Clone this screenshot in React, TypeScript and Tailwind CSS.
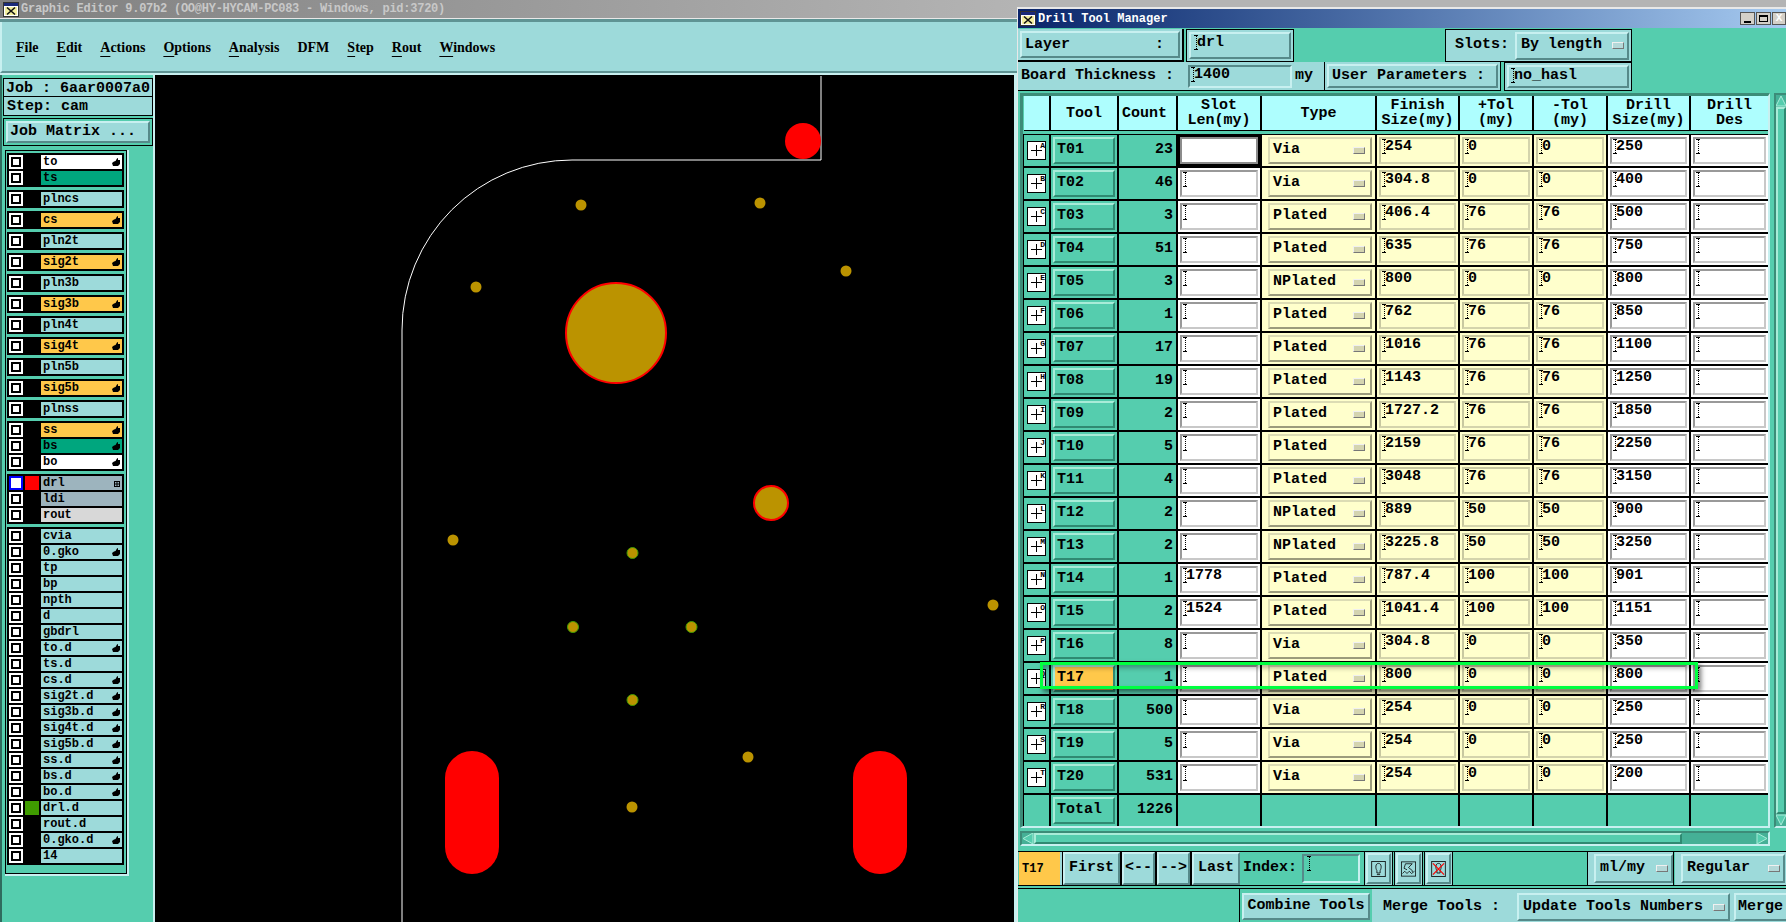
import React from "react";

const raised = "border-2 border-t-[#c8f0f0] border-l-[#c8f0f0] border-r-[#568a8a] border-b-[#568a8a]";
const sunken = "border-2 border-t-[#568a8a] border-l-[#568a8a] border-r-[#c8f0f0] border-b-[#c8f0f0]";
const tealRaised = "border-2 border-t-[#a8ecd8] border-l-[#a8ecd8] border-r-[#2f8a72] border-b-[#2f8a72]";
const yellowRaised = "border-2 border-t-[#dcdcb4] border-l-[#dcdcb4] border-r-[#9c9c7c] border-b-[#9c9c7c]";

const layerGroups = [
  [{ n: "to", c: "bg-white", h: 1 }, { n: "ts", c: "bg-[#00a67e]" }],
  [{ n: "plncs" }],
  [{ n: "cs", c: "bg-[#ffc84a]", h: 1 }],
  [{ n: "pln2t" }],
  [{ n: "sig2t", c: "bg-[#ffc84a]", h: 1 }],
  [{ n: "pln3b" }],
  [{ n: "sig3b", c: "bg-[#ffc84a]", h: 1 }],
  [{ n: "pln4t" }],
  [{ n: "sig4t", c: "bg-[#ffc84a]", h: 1 }],
  [{ n: "pln5b" }],
  [{ n: "sig5b", c: "bg-[#ffc84a]", h: 1 }],
  [{ n: "plnss" }],
  [{ n: "ss", c: "bg-[#ffc84a]", h: 1 }, { n: "bs", c: "bg-[#00a67e]", h: 1 }, { n: "bo", c: "bg-white", h: 1 }],
  [{ n: "drl", c: "bg-[#9db4be]", s: "bg-[#ff0000]", active: 1 }, { n: "ldi", c: "bg-[#9db4be]" }, { n: "rout", c: "bg-[#d8d8d8]" }],
  [
    { n: "cvia" }, { n: "0.gko", h: 1 }, { n: "tp" }, { n: "bp" }, { n: "npth" }, { n: "d" }, { n: "gbdrl" },
    { n: "to.d", h: 1 }, { n: "ts.d" }, { n: "cs.d", h: 1 }, { n: "sig2t.d", h: 1 }, { n: "sig3b.d", h: 1 },
    { n: "sig4t.d", h: 1 }, { n: "sig5b.d", h: 1 }, { n: "ss.d", h: 1 }, { n: "bs.d", h: 1 }, { n: "bo.d", h: 1 },
    { n: "drl.d", s: "bg-[#3f9c00]" }, { n: "rout.d" }, { n: "0.gko.d", h: 1 }, { n: "14" },
  ],
] as { n: string; c?: string; h?: number; s?: string; active?: number }[][];

const tools = [
  ["T01", "23", "", "Via", "254", "0", "0", "250"],
  ["T02", "46", "", "Via", "304.8", "0", "0", "400"],
  ["T03", "3", "", "Plated", "406.4", "76", "76", "500"],
  ["T04", "51", "", "Plated", "635", "76", "76", "750"],
  ["T05", "3", "", "NPlated", "800", "0", "0", "800"],
  ["T06", "1", "", "Plated", "762", "76", "76", "850"],
  ["T07", "17", "", "Plated", "1016", "76", "76", "1100"],
  ["T08", "19", "", "Plated", "1143", "76", "76", "1250"],
  ["T09", "2", "", "Plated", "1727.2", "76", "76", "1850"],
  ["T10", "5", "", "Plated", "2159", "76", "76", "2250"],
  ["T11", "4", "", "Plated", "3048", "76", "76", "3150"],
  ["T12", "2", "", "NPlated", "889", "50", "50", "900"],
  ["T13", "2", "", "NPlated", "3225.8", "50", "50", "3250"],
  ["T14", "1", "1778", "Plated", "787.4", "100", "100", "901"],
  ["T15", "2", "1524", "Plated", "1041.4", "100", "100", "1151"],
  ["T16", "8", "", "Via", "304.8", "0", "0", "350"],
  ["T17", "1", "", "Plated", "800", "0", "0", "800"],
  ["T18", "500", "", "Via", "254", "0", "0", "250"],
  ["T19", "5", "", "Via", "254", "0", "0", "250"],
  ["T20", "531", "", "Via", "254", "0", "0", "200"],
];

const menus = [
  ["F", "ile"], ["E", "dit"], ["A", "ctions"], ["O", "ptions"], ["A", "nalysis"], ["", "DFM"], ["S", "tep"], ["R", "out"], ["W", "indows"],
];

const smallPads = [
  [581, 205, 0], [760, 203, 0], [846, 271, 0], [476, 287, 0], [453, 540, 0], [632.5, 553, 1], [573, 627, 1],
  [691.5, 627, 1], [632.5, 700, 1], [993, 605, 0], [748, 757, 0], [632, 807, 0],
];

function WinIcon() {
  return (
    <svg width="16" height="15" viewBox="0 0 16 15" className="shrink-0">
      <rect x="0.5" y="0.5" width="15" height="14" fill="#ffffff" stroke="#333333" />
      <rect x="1" y="1" width="14" height="3" fill="#1a2a7a" />
      <rect x="2" y="5" width="12" height="8" fill="#f4f0a0" />
      <path d="M4 5.5 L12 12.5 M12 5.5 L4 12.5" stroke="#111111" strokeWidth="1.6" />
    </svg>
  );
}

function Hand() {
  return (
    <svg width="8" height="8" viewBox="0 0 8 8" className="absolute right-[2px] top-[3px]">
      <path d="M0 5 L2 3.5 L3.5 3 L5 0.5 L6 0 L6 2 L8 2 L8 6 L6 8 L1 8 Z" fill="#000000" />
    </svg>
  );
}

function CheckBox({ active }: { active?: number }) {
  return (
    <div className={`w-[14px] h-[14px] shrink-0 p-[2px] ${active ? "bg-[#0000ff]" : "bg-white"}`}>
      <div className={`w-full h-full bg-white border-2 ${active ? "border-white" : "border-black"}`}></div>
    </div>
  );
}

function LayerRow({ l }: { l: { n: string; c?: string; h?: number; s?: string; active?: number } }) {
  return (
    <div className="flex items-center h-[14px] bg-black gap-[2px]">
      <CheckBox active={l.active} />
      <div className={`w-[14px] h-[14px] shrink-0 ${l.s ?? "bg-black"}`}></div>
      <div className={`relative flex-1 h-[14px] pl-[2px] text-[12px] leading-[15px] text-black ${l.c ?? "bg-[#9ddada]"}`}>
        {l.n}
        {l.h ? <Hand /> : null}
        {l.active ? (
          <svg width="6" height="6" viewBox="0 0 6 6" className="absolute right-[2px] top-[5px]">
            <rect x="0.5" y="0.5" width="5" height="5" fill="none" stroke="#000000" />
            <path d="M3 0 V6 M0 3 H6" stroke="#000000" />
          </svg>
        ) : null}
      </div>
    </div>
  );
}

function Beam() {
  return (
    <svg width="5" height="15" viewBox="0 0 5 15" className="shrink-0 -mr-[2px]">
      <path d="M0 0.5 H4 M0 14.5 H4" stroke="#000000" />
      <path d="M2.5 1 V14" stroke="#000000" strokeDasharray="1 1" />
    </svg>
  );
}

function Field({ value, yellow, focus }: { value: string; yellow?: boolean; focus?: boolean }) {
  const bevel = yellow
    ? "border-t-[#c8c8a0] border-l-[#c8c8a0] border-r-[#d4d4ac] border-b-[#d4d4ac]"
    : "border-t-[#999999] border-l-[#999999] border-r-[#c8c8c8] border-b-[#c8c8c8]";
  if (focus) {
    return (
      <div className="bg-black p-[2px]">
        <div className="h-full bg-white border-2 border-[#8c8c8c]"></div>
      </div>
    );
  }
  return (
    <div className={`p-[2px] ${yellow ? "bg-[#ffffcc]" : "bg-white"}`}>
      <div className={`h-full border-2 pl-[1px] flex items-start text-[15px] leading-[16px] ${bevel}`}>
        <Beam />
        <span>{value}</span>
      </div>
    </div>
  );
}

function Notch({ tone }: { tone?: string }) {
  return <div className={`w-[12px] h-[7px] shrink-0 border border-t-[#f0f0f0] border-l-[#f0f0f0] border-r-[#777777] border-b-[#777777] ${tone ?? "bg-[#b4d8d8]"}`}></div>;
}

function Btn({ label, className }: { label: string; className: string }) {
  return (
    <div className={`flex items-center justify-center bg-[#9ddada] text-[15px] ${raised} ${className}`}>{label}</div>
  );
}

function Select({ label, className }: { label: string; className: string }) {
  return (
    <div className={`flex items-center justify-between pl-[4px] pr-[3px] bg-[#9ddada] text-[15px] ${raised} ${className}`}>
      <span>{label}</span>
      <Notch />
    </div>
  );
}

function IconBtn({ children }: { children: React.ReactNode }) {
  return (
    <div className="w-[29px] h-[33px] p-px bg-[#9ddada] border-x border-black flex">
      <div className={`flex-1 flex items-center justify-center ${raised}`}>{children}</div>
    </div>
  );
}

function BoardView() {
  return (
    <svg width="859" height="847" viewBox="155 75 859 847" className="block">
      <rect x="155" y="75" width="859" height="847" fill="#000000" />
      <path d="M821 76 V160 H572 A170 170 0 0 0 402 330 V922" fill="none" stroke="#ffffff" strokeWidth="1" />
      <circle cx="803" cy="141" r="18" fill="#ff0000" />
      <circle cx="616" cy="333" r="50" fill="#bb9300" stroke="#ff0000" strokeWidth="2" />
      <circle cx="771" cy="503" r="17" fill="#bb9300" stroke="#ff0000" strokeWidth="2" />
      {smallPads.map(([x, y, g], i) => (
        <circle key={i} cx={x} cy={y} r="5.5" fill="#bb9300" stroke={g ? "#3f9c00" : "none"} strokeWidth="1" />
      ))}
      <rect x="445" y="751" width="54" height="123" rx="27" fill="#ff0000" />
      <rect x="853" y="751" width="54" height="123" rx="27" fill="#ff0000" />
    </svg>
  );
}

export default function App() {
  return (
    <div className="w-[1786px] h-[922px] overflow-hidden flex font-['Liberation_Mono',monospace] font-bold text-black bg-[#55cdae]">
      {/* main window */}
      <div className="w-[1017px] shrink-0 flex flex-col">
        <div className="h-[19px] shrink-0 bg-linear-to-r from-[#808080] to-[#b4b4b4] border-b border-[#e8e8e8] flex items-center pl-[3px] gap-[2px] text-[#c8c8c8] text-[12px] tracking-[-0.25px] whitespace-nowrap">
          <WinIcon />
          <span>Graphic Editor 9.07b2 (OO@HY-HYCAM-PC083 - Windows, pid:3720)</span>
        </div>
        <div className="h-[56px] shrink-0 bg-[#5f9494] pt-[3px] border-b-2 border-[#c8f0f0]">
          <div className="h-[51px] bg-[#9ddada] border-l-2 border-b-2 border-l-[#c8f0f0] border-b-[#5f9494] flex items-center pl-[14px] pt-px gap-[18px] font-['Liberation_Serif',serif] text-[14px]">
            {menus.map(([u, r], i) => (
              <span key={i}>
                <span className="underline underline-offset-4">{u}</span>
                {r}
              </span>
            ))}
          </div>
        </div>
        <div className="flex-1 flex min-h-0">
          <div className="w-[155px] shrink-0 bg-[#55cdae] border-l-2 border-l-[#2f6b5e] border-r-2 border-r-[#c8f0f0] pt-[3px] flex flex-col text-[15px]">
            <div className="ml-px border border-black bg-[#9ddada]">
              <div className="h-[18px] leading-[19px] pl-[2px] border-b border-black whitespace-nowrap">Job : 6aar0007a0</div>
              <div className="h-[18px] leading-[20px] pl-[3px]">Step: cam</div>
            </div>
            <div className="ml-px mt-[2px] h-[28px] border border-black p-[2px] bg-[#55cdae]">
              <div className={`h-full pl-[2px] pt-px flex items-center bg-[#9ddada] ${raised}`}>Job Matrix ...</div>
            </div>
            <div className="flex mt-[4px]">
              <div className="ml-[3px] border-r-2 border-b-2 border-[#c8f0f0]">
                <div className="border border-black pl-px pr-[2px] pt-[2px] pb-[8px] flex flex-col gap-[3px] bg-[#55cdae] w-[122px]">
                  {layerGroups.map((g, i) => (
                    <div key={i} className="border-2 border-black bg-black flex flex-col gap-[2px]">
                      {g.map((l) => (
                        <LayerRow key={l.n} l={l} />
                      ))}
                    </div>
                  ))}
                </div>
              </div>
            </div>
          </div>
          <div className="flex-1 border-r-[3px] border-[#c8f0f0] bg-black overflow-hidden">
            <BoardView />
          </div>
        </div>
      </div>

      {/* Drill Tool Manager dialog */}
      <div className="flex-1 flex flex-col min-w-0">
        <div className="h-[7px] shrink-0 bg-[#b4b4b4]"></div>
        <div className="flex-1 flex flex-col border-l border-t-2 border-[#e8e8e8] bg-[#55cdae] min-h-0">
          <div className="h-[19px] shrink-0 mb-px flex items-center pl-[2px] gap-[2px] bg-linear-to-r from-[#0a246a] to-[#a6caf0] text-white text-[12px]">
            <WinIcon />
            <span className="flex-1">Drill Tool Manager</span>
            <div className="flex gap-px">
              <div className="w-[15px] h-[13px] bg-[#d4d0c8] border border-[#555555] flex items-end justify-center pb-px"><div className="w-[7px] h-[2px] bg-black"></div></div>
              <div className="w-[15px] h-[13px] bg-[#d4d0c8] border border-[#555555] p-[2px]"><div className="w-full h-full border border-black border-t-2"></div></div>
              <div className="w-[14px] h-[13px] bg-[#d4d0c8] border border-[#555555] flex items-center justify-center text-[11px] leading-none">X</div>
            </div>
          </div>

          {/* layer + slots */}
          <div className="h-[33px] shrink-0 flex text-[15px]">
            <div className="w-[166px] bg-[#9ddada] border-b-2 border-r-2 border-black p-[2px] flex">
              <div className={`flex-1 flex justify-between items-center px-[3px] pr-[14px] pt-px ${raised}`}>
                <span>Layer</span>
                <span>:</span>
              </div>
            </div>
            <div className="w-[108px] bg-[#9ddada] border border-black ml-[2px] p-[2px] flex">
              <div className={`flex-1 flex items-start pl-[3px] pt-px leading-[15px] ${raised}`}>
                <Beam />
                <span>drl</span>
              </div>
            </div>
            <div className="flex-1"></div>
            <div className="w-[187px] bg-[#9ddada] border border-black flex items-center pl-[9px] pr-[2px] gap-[6px] mr-[154px]">
              <span className="whitespace-nowrap">Slots:</span>
              <Select label="By length" className="flex-1 h-[28px]" />
            </div>
          </div>

          {/* board thickness + user parameters */}
          <div className="h-[29px] shrink-0 flex text-[15px]">
            <div className="w-[307px] bg-[#9ddada] border-b border-r border-black flex items-center pl-[3px] whitespace-nowrap">
              <span>Board Thickness :</span>
              <div className={`w-[104px] h-[23px] ml-[14px] mr-[3px] flex items-start pl-[1px] leading-[15px] ${sunken}`}>
                <Beam />
                <span>1400</span>
              </div>
              <span>my</span>
            </div>
            <div className="w-[176px] bg-[#9ddada] border-b border-r border-black p-[2px] flex">
              <div className={`flex-1 flex items-center pl-[3px] whitespace-nowrap ${raised}`}>User Parameters :</div>
            </div>
            <div className="w-[128px] ml-[3px] bg-[#9ddada] border border-black p-[2px] flex">
              <div className={`flex-1 flex items-start pl-[2px] leading-[15px] pt-px ${raised}`}>
                <Beam />
                <span>no_hasl</span>
              </div>
            </div>
          </div>

          {/* table + vertical scrollbar */}
          <div className="flex pl-[2px] mt-[2px] gap-[4px] shrink-0">
            <div className="w-[750px] shrink-0 border-t-[3px] border-l-[3px] border-t-[#3c8c78] border-l-[#3c8c78] border-r-2 border-b-2 border-r-[#c8f0f0] border-b-[#c8f0f0] pl-px text-[15px]">
              <div className="grid grid-cols-[25px_66px_57px_82px_113px_81px_72px_72px_81px_77px] gap-x-[2px] bg-black border-b border-black mb-[3px] text-center leading-[15px]">
                {["", "Tool", "Count", "Slot\nLen(my)", "Type", "Finish\nSize(my)", "+Tol\n(my)", "-Tol\n(my)", "Drill\nSize(my)", "Drill\nDes"].map((h, i) => (
                  <div key={i} className={`h-[34px] bg-[#aefefe] flex items-center whitespace-pre ${i === 2 ? "justify-start pl-[3px]" : "justify-center"}`}>{h}</div>
                ))}
              </div>
              <div className="relative -ml-px border-l border-t border-black bg-black grid grid-cols-[25px_66px_57px_82px_113px_81px_72px_72px_81px_77px] auto-rows-[31px] gap-[2px]">
                {tools.map((t, i) => (
                  <React.Fragment key={t[0]}>
                    <div className="bg-[#55cdae] flex items-center justify-center">
                      <div className="relative w-[19px] h-[19px] bg-white border border-black">
                        <div className="absolute left-[3px] right-[3px] top-[8px] h-px bg-black"></div>
                        <div className="absolute top-[3px] bottom-[3px] left-[8px] w-px bg-black"></div>
                        <span className="absolute right-0 top-0 text-[8px] leading-[7px] bg-white">{String.fromCharCode(65 + i)}</span>
                      </div>
                    </div>
                    <div className="bg-[#55cdae] p-[2px] flex">
                      <div className={`w-[62px] flex items-center pl-[2px] ${tealRaised} ${t[0] === "T17" ? "bg-[#ffc84a]" : ""}`}>{t[0]}</div>
                    </div>
                    <div className="bg-[#55cdae] flex items-center justify-end pr-[3px]">{t[1]}</div>
                    <Field value={t[2]} focus={i === 0} />
                    <div className="bg-[#ffffcc] py-[2px] pl-[6px] pr-[3px] flex">
                      <div className={`flex-1 flex items-center justify-between pl-[3px] pr-[5px] ${yellowRaised}`}>
                        <span>{t[3]}</span>
                        <Notch tone="bg-[#d4d4b0]" />
                      </div>
                    </div>
                    <Field value={t[4]} yellow />
                    <Field value={t[5]} yellow />
                    <Field value={t[6]} yellow />
                    <Field value={t[7]} />
                    <Field value="" />
                  </React.Fragment>
                ))}
                <div className="bg-[#55cdae]"></div>
                <div className="bg-[#55cdae] p-[2px] flex">
                  <div className={`w-[62px] flex items-center pl-[2px] ${tealRaised}`}>Total</div>
                </div>
                <div className="bg-[#55cdae] flex items-center justify-end pr-[3px]">1226</div>
                <div className="bg-[#55cdae]"></div>
                <div className="bg-[#55cdae]"></div>
                <div className="bg-[#55cdae]"></div>
                <div className="bg-[#55cdae]"></div>
                <div className="bg-[#55cdae]"></div>
                <div className="bg-[#55cdae]"></div>
                <div className="bg-[#55cdae]"></div>
                {/* current tool marker */}
                <div className="absolute left-[16px] top-[527px] w-[658px] h-[27px] border-[3px] border-[#00ff40] shadow-[3px_3px_5px_rgba(0,0,0,0.55),inset_2px_3px_5px_rgba(0,0,0,0.3)]"></div>
              </div>
            </div>
            <div className="flex-1 flex flex-col border-2 border-t-[#3c8c78] border-l-[#3c8c78] border-r-[#c8f0f0] border-b-[#c8f0f0] bg-[#45b096]">
              <svg width="10" height="12" viewBox="0 0 10 12" className="block shrink-0"><path d="M5 1 L10 11 H0 Z" fill="#55cdae" stroke="#a8ecd8" /></svg>
              <div className={`flex-1 bg-[#55cdae] ${tealRaised}`}></div>
              <svg width="10" height="12" viewBox="0 0 10 12" className="block shrink-0"><path d="M5 11 L10 1 H0 Z" fill="#55cdae" stroke="#a8ecd8" /></svg>
            </div>
          </div>

          {/* horizontal scrollbar */}
          <div className="ml-[2px] mt-[3px] w-[750px] h-[15px] shrink-0 flex items-stretch border-2 border-t-[#3c8c78] border-l-[#3c8c78] border-r-[#c8f0f0] border-b-[#c8f0f0] bg-[#45b096]">
            <svg width="12" height="11" viewBox="0 0 12 11" className="block shrink-0"><path d="M1 5.5 L11 0 V11 Z" fill="#55cdae" stroke="#a8ecd8" /></svg>
            <div className={`w-[648px] bg-[#55cdae] ${tealRaised}`}></div>
            <div className="flex-1"></div>
            <svg width="12" height="11" viewBox="0 0 12 11" className="block shrink-0"><path d="M11 5.5 L1 0 V11 Z" fill="#55cdae" stroke="#a8ecd8" /></svg>
          </div>

          {/* navigation toolbar */}
          <div className="h-[35px] mt-[5px] shrink-0 flex border-t border-b border-black text-[15px] whitespace-nowrap">
            <div className="w-[41px] ml-px bg-[#ffc84a] flex items-center pl-[3px] text-[12px]">T17</div>
            <div className="w-[2px] bg-[#9ddada]"></div>
            <div className="flex bg-black gap-[2px] border-l border-black">
              <Btn label="First" className="w-[57px]" />
              <Btn label="<--" className="w-[33px]" />
              <Btn label="-->" className="w-[33px]" />
              <Btn label="Last" className="w-[48px]" />
            </div>
            <div className="flex items-center ml-[3px] w-[121px] shrink-0">
              <span className="mr-[5px]">Index:</span>
              <div className={`w-[58px] h-[29px] flex items-start pl-[3px] ${sunken}`}><Beam /></div>
            </div>
            <div className="flex gap-px">
              <IconBtn>
                <svg width="15" height="16" viewBox="0 0 18 20"><rect x="0.5" y="0.5" width="17" height="19" fill="none" stroke="#000000" /><path d="M9 3 C5 3 5 9 7 12 V15 H11 V12 C13 9 13 3 9 3 Z M7 17 H11" fill="none" stroke="#000000" /></svg>
              </IconBtn>
              <IconBtn>
                <svg width="15" height="16" viewBox="0 0 20 20"><rect x="0.5" y="0.5" width="19" height="19" fill="none" stroke="#000000" /><path d="M6 3 H15 L10 8 L15 12 V14 M2 16 L5 13 L8 16 L11 13 L14 16 L18 13 M6 3 L4 9 L8 11" fill="none" stroke="#000000" /></svg>
              </IconBtn>
              <IconBtn>
                <svg width="15" height="16" viewBox="0 0 18 20"><rect x="0.5" y="0.5" width="17" height="19" fill="none" stroke="#000000" /><path d="M9 3 C5 3 5 9 7 12 V15 H11 V12 C13 9 13 3 9 3 Z" fill="none" stroke="#000000" /><path d="M2 3 L16 17 M16 3 L2 17" stroke="#ff0000" strokeWidth="1.5" /></svg>
              </IconBtn>
            </div>
            <div className="flex-1"></div>
            <div className="w-[87px] shrink-0 bg-[#9ddada] border-x border-black pl-[6px] py-[2px] flex">
              <Select label="ml/my" className="flex-1" />
            </div>
            <div className="w-[111px] shrink-0 ml-px bg-[#9ddada] pl-[6px] pr-px py-[2px] flex">
              <Select label="Regular" className="flex-1" />
            </div>
          </div>

          {/* merge row */}
          <div className="flex-1 mt-[2px] flex text-[15px] border-t border-black whitespace-nowrap">
            <div className="w-[222px] shrink-0 border-r border-black"></div>
            <div className="w-[132px] pl-[2px] pr-[2px] pt-[4px] pb-[2px] flex shrink-0">
              <Btn label="Combine Tools" className="flex-1" />
            </div>
            <div className="flex-1 min-w-0 bg-[#9ddada] flex items-start pt-[4px] pl-[11px]">
              <span className="mr-[17px] leading-[28px] shrink-0">Merge Tools :</span>
              <Select label="Update Tools Numbers" className="w-[213px] h-[28px] shrink-0" />
              <Btn label="Merge" className="w-[60px] h-[28px] ml-[4px] justify-start pl-[2px] shrink-0" />
            </div>
          </div>
        </div>
      </div>
    </div>
  );
}
